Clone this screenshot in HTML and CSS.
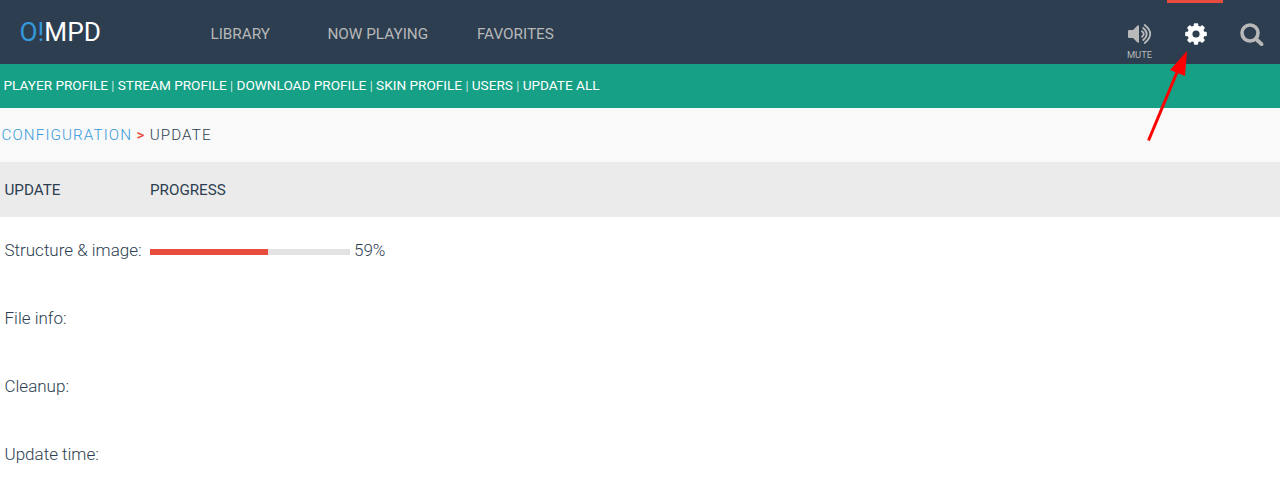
FILE: index.html
```html
<!DOCTYPE html>
<html lang="en">
<head>
<meta charset="utf-8">
<title>O!MPD</title>
<link rel="stylesheet" href="styles.css">
</head>
<body>
<header class="topbar">
  <div class="logo"><span class="logo-accent">O!</span>MPD</div>
  <nav class="nav"><a class="library">LIBRARY</a><a class="playing">NOW PLAYING</a><a>FAVORITES</a></nav>
  <div class="tools">
    <div class="tool"><svg class="icon" viewBox="0 0 26 24" width="26" height="24"><path fill="#b8b8b8" d="M1 9q0-1 1-1h4l4.500-4.500q1.500-1 1.500 1v15q0 2-1.500 1l-4.500-4.500H2q-1 0-1-1z"/><g fill="none" stroke="#b8b8b8" stroke-width="1.9" stroke-linecap="round"><path d="M15 9.300q3.400 2.700 0 5.400M16.200 6q7 6 0 12M17.700 3q11 9 0 18"/></g></svg><span class="label">MUTE</span></div>
    <div class="tool active"><svg class="icon" viewBox="0 0 24 24" width="24" height="24"><g fill="#fff"><circle cx="12" cy="12" r="8.500"/><g id="teeth"><rect x="9.800" y="1.200" width="4.400" height="21.600" rx="1"/><rect x="1.200" y="9.800" width="21.600" height="4.400" rx="1"/></g><use href="#teeth" transform="rotate(45 12 12)"/></g><circle cx="12" cy="12" r="3.600" fill="#2c3e50"/></svg></div>
    <div class="tool"><svg class="icon" viewBox="0 0 24 24" width="24" height="24" fill="none" stroke="#b8b8b8"><circle cx="10" cy="11" r="8" stroke-width="3.600"/><path d="M16 17l5.500 5.200" stroke-width="3.800" stroke-linecap="round"/></svg></div>
  </div>
</header>
<nav class="submenu"><a>PLAYER PROFILE</a> <i>|</i> <a>STREAM PROFILE</a> <i>|</i> <a>DOWNLOAD PROFILE</a> <i>|</i> <a>SKIN PROFILE</a> <i>|</i> <a>USERS</a> <i>|</i> <a>UPDATE ALL</a></nav>
<div class="crumbs"><a>CONFIGURATION</a><b>&gt;</b><span>UPDATE</span></div>
<main>
  <div class="row head"><span>UPDATE</span><span>PROGRESS</span></div>
  <div class="row"><span>Structure &amp; image:</span><div class="progress"><div class="track"><div class="bar" style="width:59%"></div></div><span>59%</span></div></div>
  <div class="row"><span>File info:</span></div>
  <div class="row"><span>Cleanup:</span></div>
  <div class="row"><span>Update time:</span></div>
</main>
<svg class="pointer" viewBox="0 0 50 102" width="50" height="102"><path d="M8.500 100.500L37.500 31" stroke="#f00" stroke-width="3"/><path d="M47 11L30 30L45 36Z" fill="#f00"/></svg>
</body>
</html>
```

FILE: styles.css
```css
* { box-sizing: border-box; }
body { margin: 0; height: 487px; overflow: hidden; background: #fff; color: #2c3e50; font-family: Roboto, sans-serif; font-weight: 300; position: relative; }
.topbar { height: 64px; background: #2c3e50; display: flex; }
.logo { width: 210.4px; padding-left: 19.5px; font-size: 26.2px; line-height: 65px; color: #fff; font-weight: 400; }
.logo-accent { color: #3498db; }
.nav { display: flex; flex: 1; font-size: 15.3px; line-height: 68px; font-weight: 400; color: #b8b8b8; }
.library { width: 117px; }
.playing { width: 149.5px; }
.tools { display: flex; padding-right: 1px; }
.tool { width: 56px; border-top: 3px solid transparent; display: flex; flex-direction: column; align-items: center; padding: 19px 0 0 1px; }
.active { border-color: #e74c3c; }
.icon { flex: none; }
.label { font-size: 9.4px; line-height: 11px; margin-top: 3px; color: #b8b8b8; font-weight: 400; }
.submenu { height: 44px; background: #16a085; color: #fff; padding-left: 3.5px; font-size: 13.6px; line-height: 43px; font-weight: 400; white-space: nowrap; }
.submenu i { font-style: normal; font-weight: 300; }
.crumbs { height: 54px; background: #f9f9f9; padding-left: 1.5px; font-size: 15.2px; line-height: 54px; letter-spacing: 1.1px; display: flex; gap: 4.3px; }
.crumbs a { color: #3498db; }
.crumbs b { color: #e74c3c; font-weight: 500; }
.row { height: 68px; padding-left: 4.5px; display: grid; grid-template-columns: 145.5px 1fr; font-size: 17px; line-height: 67px; white-space: nowrap; }
.head { height: 55px; background: #ebebeb; font-size: 15.2px; line-height: 56px; font-weight: 400; }
.progress { height: 67px; display: flex; align-items: center; gap: 4px; }
.track { width: 200px; height: 6px; background: #e2e2e2; margin-top: 3px; }
.bar { height: 6px; background: #e74c3c; }
.pointer { position: absolute; left: 1140px; top: 40px; }
```
